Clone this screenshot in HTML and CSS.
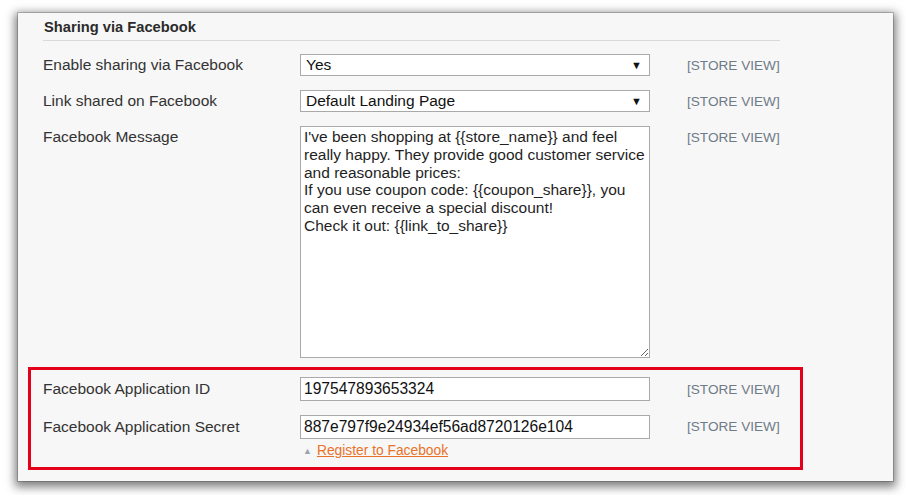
FILE: index.html
```html
<!DOCTYPE html>
<html>
<head>
<meta charset="utf-8">
<link rel="stylesheet" href="styles.css">
</head>
<body>
<div class="panel">
  <div class="section">
    <h3 class="legend">Sharing via Facebook</h3>
    <div class="row row-first">
      <label class="label">Enable sharing via Facebook</label>
      <div class="select"><span>Yes</span><span class="arrow">▼</span></div>
      <span class="scope">[STORE VIEW]</span>
    </div>
    <div class="row">
      <label class="label">Link shared on Facebook</label>
      <div class="select"><span>Default Landing Page</span><span class="arrow">▼</span></div>
      <span class="scope">[STORE VIEW]</span>
    </div>
    <div class="row row-top">
      <label class="label">Facebook Message</label>
      <textarea class="textarea">I've been shopping at {{store_name}} and feel really happy. They provide good customer service and reasonable prices:
If you use coupon code: {{coupon_share}}, you can even receive a special discount!
Check it out: {{link_to_share}}</textarea>
      <span class="scope">[STORE VIEW]</span>
    </div>
    <div class="highlight">
      <div class="row row-first">
        <label class="label">Facebook Application ID</label>
        <div class="input">197547893653324</div>
        <span class="scope">[STORE VIEW]</span>
      </div>
      <div class="row row-top row-secret">
        <label class="label">Facebook Application Secret</label>
        <div class="field">
          <div class="input">887e797f9e24934ef56ad8720126e104</div>
          <div class="note"><span class="tri">▲</span><a class="link" href="#">Register to Facebook</a></div>
        </div>
        <span class="scope">[STORE VIEW]</span>
      </div>
    </div>
  </div>
</div>
</body>
</html>
```

FILE: styles.css
```css
html, body {
  margin: 0;
  padding: 0;
  background: #ffffff;
}
body {
  padding: 13px 13px 15px 18px;
  font-family: Arial, "Liberation Sans", sans-serif;
  color: #2f2f2f;
}
.panel {
  width: 875px;
  height: 468px;
  box-sizing: border-box;
  background: #f7f7f7;
  box-shadow: 0 0 0 1px rgba(0, 0, 0, 0.18), 0 3px 9px 3px rgba(0, 0, 0, 0.5);
  padding: 0 0 0 25px;
}
.section {
  width: 737px;
}
.legend {
  margin: 0;
  padding: 6px 0 5px 1px;
  font-size: 14.7px;
  line-height: 16px;
  font-weight: bold;
  color: #2b2b2b;
  border-bottom: 1px solid #d9d9d9;
}
.row {
  display: grid;
  grid-template-columns: 257px 350px 1fr;
  align-items: center;
  margin-top: 14px;
}
.row-first {
  margin-top: 13px;
}
.highlight .row-first {
  margin-top: 0;
}
.row-top {
  align-items: start;
}
.row-top .label {
  padding-top: 2px;
}
.row-top .scope {
  padding-top: 4px;
}
.row-secret .label {
  padding-top: 3px;
}
.label {
  font-size: 15.5px;
  color: #333333;
  white-space: nowrap;
}
.scope {
  padding-left: 37px;
  font-size: 13.6px;
  color: #6e7b87;
  white-space: nowrap;
}
.select {
  height: 22px;
  box-sizing: border-box;
  border: 1px solid #a9a9a9;
  background: #ffffff;
  display: flex;
  justify-content: space-between;
  align-items: center;
  padding: 0 7px 0 5px;
  font-size: 15.5px;
  color: #111111;
}
.arrow {
  font-size: 11px;
}
.textarea {
  height: 232px;
  box-sizing: border-box;
  border: 1px solid #a9a9a9;
  background: #ffffff;
  font-family: Arial, "Liberation Sans", sans-serif;
  font-size: 15.5px;
  line-height: 17.8px;
  color: #1f1f1f;
  padding: 1px 3px;
  margin: 0;
  resize: both;
}
.highlight {
  margin: 9px -23px 0 -15px;
  border: 3px solid #e4001b;
  padding: 7px 20px 8px 12px;
}
.field {
  display: flex;
  flex-direction: column;
}
.input {
  height: 24px;
  box-sizing: border-box;
  border: 1px solid #a9a9a9;
  background: #ffffff;
  font-size: 15.6px;
  line-height: 22px;
  padding: 0 3px;
  color: #111111;
}
.note {
  margin-top: 4px;
  font-size: 13.8px;
  line-height: 16px;
  padding-left: 3px;
}
.tri {
  color: #9aa4ad;
  font-size: 9px;
  margin-right: 5px;
  vertical-align: 1px;
}
.link {
  color: #e9722a;
  text-decoration: underline;
}
```
